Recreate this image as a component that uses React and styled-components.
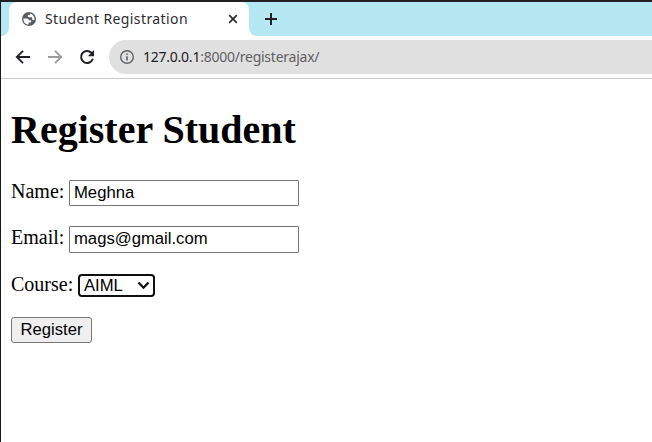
import React from 'react';
import styled, { createGlobalStyle } from 'styled-components';

const GlobalStyle = createGlobalStyle`
  * { box-sizing: border-box; }
  body { margin: 0; background: #fff; overflow: hidden; }
`;

const Window = styled.div`
  height: 100vh;
  border-top: 2px solid #222021;
  border-left: 1px solid #1c1a1b;
  background: #fff;
  overflow: hidden;
`;

const TabStrip = styled.div`
  display: flex;
  height: 34px;
  background: #fff;
`;

const StripEdge = styled.div`
  width: 8px;
  background: #b5e8f3;
  border-bottom-right-radius: 8px;
`;

const TabHolder = styled.div`
  width: 240px;
  background: #b5e8f3;
`;

const Tab = styled.div`
  display: flex;
  align-items: center;
  height: 34px;
  padding: 0 9px 0 12px;
  background: #fff;
  border-radius: 8px 8px 0 0;
`;

const TabTitle = styled.span`
  flex: 1;
  margin-left: 8px;
  font: 14px/20px 'Noto Sans', sans-serif;
  letter-spacing: 0.4px;
  color: #2b2c2f;
  white-space: nowrap;
`;

const StripRest = styled.div`
  flex: 1;
  padding: 11px 0 0 16px;
  background: #b5e8f3;
  border-bottom-left-radius: 8px;
`;

const Icon = styled.svg`
  display: block;
  flex: none;
`;

const Toolbar = styled.div`
  display: flex;
  align-items: center;
  height: 43px;
  padding: 0 0 1px 14px;
  border-bottom: 1px solid #c9c9cb;
`;

const NavButtons = styled.div`
  display: flex;
  gap: 16px;
  width: 94px;
`;

const AddressBar = styled.div`
  display: flex;
  align-items: center;
  flex: 1;
  height: 34px;
  padding-left: 10px;
  background: #e0e0e0;
  border-radius: 17px 0 0 17px;
`;

const Url = styled.span`
  margin-left: 8px;
  font: 14px/20px 'Noto Sans', sans-serif;
  letter-spacing: -0.24px;
  color: #5f6063;
  white-space: nowrap;
`;

const Host = styled.span`
  color: #202124;
`;

const Page = styled.main`
  padding: 27px 10px 0;
  font: 20px/23px 'Liberation Serif', serif;
  color: #000;
`;

const Heading = styled.h1`
  margin: 0 0 27px;
  font-size: 40px;
  line-height: 47px;
`;

const Field = styled.div`
  display: flex;
  align-items: center;
  height: ${(p) => p.$height || 26}px;
  margin-bottom: 20px;
`;

const Label = styled.label`
  width: ${(p) => p.$width}px;
  padding-bottom: ${(p) => p.$lift}px;
  white-space: nowrap;
`;

const TextInput = styled.input`
  width: 230px;
  height: 100%;
  margin: 0;
  padding: 1px 4px 2px;
  border: 1px solid #767676;
  border-radius: 1px;
  outline: none;
  background: #fff;
  font: 16.667px 'Liberation Sans', sans-serif;
  color: #000;
`;

const SelectBox = styled.div`
  display: grid;
  align-items: center;
  width: 77px;
  height: 23px;
  & > * { grid-area: 1 / 1; }
  & > svg { justify-self: end; margin-right: 5px; pointer-events: none; }
`;

const Select = styled.select`
  appearance: none;
  width: 77px;
  height: 23px;
  margin: 0;
  padding: 0 4px;
  border: 2px solid #101010;
  border-radius: 4px;
  outline: none;
  background: #fff;
  font: 16.667px/19px 'Liberation Sans', sans-serif;
  color: #000;
`;

const SubmitButton = styled.button`
  display: block;
  width: 81px;
  height: 26px;
  padding: 0 0 1px;
  border: 1px solid #767676;
  border-radius: 3px;
  background: #efefef;
  font: 16.667px 'Liberation Sans', sans-serif;
  color: #000;
`;

const GlobeIcon = () => (
  <Icon width="16" height="16" viewBox="0 0 16 16">
    <circle cx="8" cy="8" r="7" fill="#5a5d62" />
    <path
      fill="#fff"
      d="M2.4 7.4 6 7.6c1.3.1 1.7.8 1.7 1.6h1.4c.8 0 1.1.6 1.1 1.2 0 .8-.6 1-1.4 1H7.6v2.1C4.500 13.500 2.200 11 2.400 7.400ZM9.500 2.600c-.1 1-.6 1.300-1.500 1.300H6.800v1.400c0 .7.5.9 1.200.9h2.300c.7 0 .9.5.9 1.200v.9c0 .6.5.8 1.100.8h1.200c.4-3-1.500-5.600-4-6.500Z"
    />
  </Icon>
);

const CloseIcon = () => (
  <Icon width="14" height="14" viewBox="0 0 14 14">
    <path d="M3.200 3.200l7.600 7.600M10.800 3.200l-7.600 7.600" stroke="#2b2c2f" strokeWidth="1.700" />
  </Icon>
);

const PlusIcon = () => (
  <Icon width="12" height="12" viewBox="0 0 12 12">
    <path d="M6 0v12M0 6h12" stroke="#202124" strokeWidth="2" />
  </Icon>
);

const ArrowIcon = ({ color, forward }) => (
  <Icon width="16" height="16" viewBox="0 0 16 16">
    <path
      d={forward ? 'M1 8h12.600M8 1.800 14.200 8 8 14.200' : 'M15 8H2.400M8 1.800 1.800 8 8 14.200'}
      fill="none"
      stroke={color}
      strokeWidth="1.900"
    />
  </Icon>
);

const ReloadIcon = () => (
  <Icon width="16" height="16" viewBox="0 0 16 16">
    <path d="M13.800 9.800A6 6 0 1 1 12.400 3.800L14 5.400" fill="none" stroke="#202124" strokeWidth="2" />
    <path d="M15 1v6.200H8.800Z" fill="#202124" />
  </Icon>
);

const InfoIcon = () => (
  <Icon width="16" height="16" viewBox="0 0 16 16">
    <circle cx="8" cy="8" r="6.300" fill="none" stroke="#5f6368" strokeWidth="1.400" />
    <path d="M8 7.200v4.200M8 4.400V6" stroke="#5f6368" strokeWidth="1.600" />
  </Icon>
);

const Chevron = () => (
  <Icon width="13" height="9" viewBox="0 0 13 9">
    <path d="M1.500 1.500 6.500 6.700l5-5.200" fill="none" stroke="#101010" strokeWidth="2.300" />
  </Icon>
);

export default function App() {
  return (
    <Window>
      <GlobalStyle />
      <TabStrip>
        <StripEdge />
        <TabHolder>
          <Tab>
            <GlobeIcon />
            <TabTitle>Student Registration</TabTitle>
            <CloseIcon />
          </Tab>
        </TabHolder>
        <StripRest>
          <PlusIcon />
        </StripRest>
      </TabStrip>
      <Toolbar>
        <NavButtons>
          <ArrowIcon color="#202124" />
          <ArrowIcon color="#9b9b9d" forward />
          <ReloadIcon />
        </NavButtons>
        <AddressBar>
          <InfoIcon />
          <Url>
            <Host>127.0.0.1</Host>:8000/registerajax/
          </Url>
        </AddressBar>
      </Toolbar>
      <Page>
        <Heading>Register Student</Heading>
        <Field>
          <Label $width={58} $lift={4} htmlFor="name">Name:</Label>
          <TextInput id="name" defaultValue="Meghna" />
        </Field>
        <Field $height={27}>
          <Label $width={58} $lift={4} htmlFor="email">Email:</Label>
          <TextInput id="email" defaultValue="mags@gmail.com" />
        </Field>
        <Field $height={24}>
          <Label $width={67} $lift={2} htmlFor="course">Course:</Label>
          <SelectBox>
            <Select id="course" defaultValue="AIML">
              <option>AIML</option>
            </Select>
            <Chevron />
          </SelectBox>
        </Field>
        <SubmitButton type="button">Register</SubmitButton>
      </Page>
    </Window>
  );
}
